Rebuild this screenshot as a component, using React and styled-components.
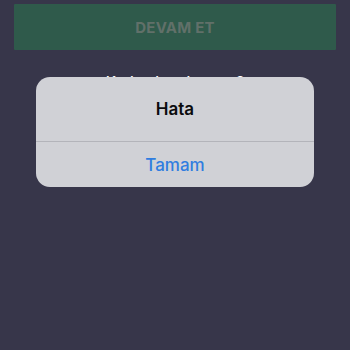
import React from 'react'
import styled, { createGlobalStyle } from 'styled-components'

const GlobalStyle = createGlobalStyle`
  html, body {
    margin: 0;
    padding: 0;
    background: #37364a;
    font-family: Inter, "Liberation Sans", sans-serif;
  }
`

const Screen = styled.div`
  position: relative;
  width: 350px;
  height: 350px;
  overflow: hidden;
  background: #37364a;
`

const Content = styled.div`
  display: flex;
  flex-direction: column;
  align-items: center;
  padding: 4px 14px 0;
`

const ContinueButton = styled.button`
  width: 100%;
  height: 46px;
  border: none;
  border-radius: 1px;
  background: #2f5a4b;
  color: #617069;
  font-family: Inter, "Liberation Sans", sans-serif;
  font-weight: 700;
  font-size: 15px;
  letter-spacing: 0.2px;
`

const ResendText = styled.p`
  margin: 22px 0 0;
  color: #ffffff;
  font-size: 15px;
  font-weight: 500;
`

const Overlay = styled.div`
  position: absolute;
  inset: 0;
  display: flex;
  justify-content: center;
  align-items: flex-start;
  padding-top: 77px;
`

const Alert = styled.div`
  width: 278px;
  border-radius: 14px;
  background: #d0d1d6;
  display: flex;
  flex-direction: column;
  overflow: hidden;
`

const AlertTitle = styled.div`
  height: 64px;
  display: flex;
  align-items: center;
  justify-content: center;
  color: #0b0b0d;
  font-size: 17px;
  font-weight: 600;
`

const Divider = styled.div`
  height: 1px;
  background: #b3b4ba;
`

const AlertAction = styled.div`
  height: 45px;
  display: flex;
  align-items: center;
  justify-content: center;
  color: #2f7de0;
  font-size: 17px;
  font-weight: 500;
`

export default function App() {
  return (
    <Screen>
      <GlobalStyle />
      <Content>
        <ContinueButton>DEVAM ET</ContinueButton>
        <ResendText>Kodu almadınız mı?</ResendText>
      </Content>
      <Overlay>
        <Alert>
          <AlertTitle>Hata</AlertTitle>
          <Divider />
          <AlertAction>Tamam</AlertAction>
        </Alert>
      </Overlay>
    </Screen>
  )
}
